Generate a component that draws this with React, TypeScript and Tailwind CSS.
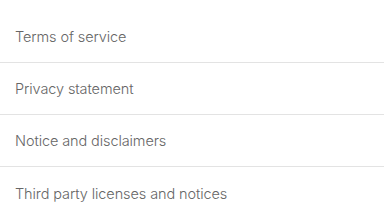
const items = [
  "Terms of service",
  "Privacy statement",
  "Notice and disclaimers",
  "Third party licenses and notices",
];

export default function App() {
  return (
    <div className="w-[384px] h-[216px] overflow-hidden bg-white pt-[11px]" style={{ fontFamily: "Inter, 'Liberation Sans', sans-serif" }}>
      {items.map((label, i) => (
        <div
          key={label}
          className={`h-[52px] flex items-center px-[15px] pt-[1px] ${i < items.length - 1 ? "border-b border-[#e3e3e3]" : ""}`}
        >
          <span className="text-[14.5px] font-light text-[#666666] tracking-[-0.1px]">{label}</span>
        </div>
      ))}
    </div>
  );
}
